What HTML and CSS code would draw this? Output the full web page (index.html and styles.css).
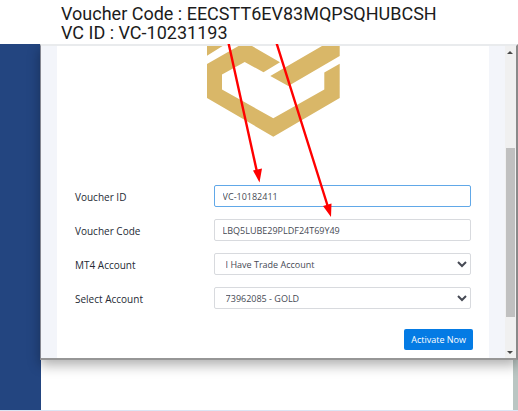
FILE: index.html
```html
<!DOCTYPE html>
<html lang="en">
<head>
<meta charset="utf-8">
<title>Voucher activation</title>
<link rel="stylesheet" href="styles.css">
</head>
<body>
<header class="caption">
  <p>Voucher Code : EECSTT6EV83MQPSQHUBCSH</p>
  <p>VC ID : VC-10231193</p>
</header>
<div class="stage">
  <div class="sidebar"></div>
  <div class="page">
    <div class="window">
      <main class="card">
        <div class="brand">
          <svg class="logo" viewBox="207 46 133 91" role="img" aria-label="Logo">
            <path d="M207 46H222.6L207 55.7ZM207 64L238.5 46H252L280 62.2L263.5 72.3L244.7 62L222 74.5V89.4L273.3 118.3L324.3 89.5V72.5L339.7 63.7V98L273.3 136.7L207 98ZM322 46H339.7V56L288.3 86L270.3 76Z"/>
          </svg>
        </div>
        <form class="form">
          <div class="row">
            <label for="voucher-id">Voucher ID</label>
            <input class="field active" id="voucher-id" type="text" value="VC-10182411">
          </div>
          <div class="row">
            <label for="voucher-code">Voucher Code</label>
            <input class="field" id="voucher-code" type="text" value="LBQ5LUBE29PLDF24T69Y49">
          </div>
          <div class="row">
            <label for="mt4">MT4 Account</label>
            <select class="field" id="mt4"><option>I Have Trade Account</option></select>
          </div>
          <div class="row">
            <label for="account">Select Account</label>
            <select class="field" id="account"><option>73962085 - GOLD</option></select>
          </div>
          <button class="submit" type="button">Activate Now</button>
        </form>
      </main>
      <div class="scrollbar" aria-hidden="true">
        <svg class="tick" viewBox="0 0 10 12"><path d="M5 5L8 8H2Z"/></svg>
        <div class="track"><div class="thumb"></div></div>
        <svg class="tick" viewBox="0 0 10 12"><path d="M2 5H8L5 8Z"/></svg>
      </div>
    </div>
  </div>
  <svg class="arrows" width="140" height="180" viewBox="220 44 140 180" aria-hidden="true">
    <path class="shaft" d="M228.500 43L257 172M276.500 43L328 207"/>
    <path class="head" d="M259.500 182.500L253 170.500L262 168.500ZM331 217L323 206L331.500 203.500Z"/>
  </svg>
</div>
</body>
</html>
```

FILE: styles.css
```css
* {
  box-sizing: border-box;
}

body {
  margin: 0;
  min-height: 100vh;
  display: flex;
  flex-direction: column;
  background: #fff;
  font-family: "Open Sans", "Noto Sans", sans-serif;
}

.caption {
  height: 44px;
  padding: 4px 0 0 61px;
  font: 18px/19px Roboto, sans-serif;
  color: #1c1c1c;
}

.caption p {
  margin: 0;
}

.stage {
  position: relative;
  overflow: hidden;
  flex: 1;
  display: flex;
  border-bottom: 1px solid #dce5f4;
}

.sidebar {
  width: 41px;
  background: #234580;
}

.page {
  flex: 1;
  min-width: 0;
  border-right: 5px solid #bac6c3;
}

.window {
  display: flex;
  margin: 0 -5px 0 -1px;
  padding-left: 16px;
  background: #f3f5fa;
  border: 1px solid #858791;
  border-top: 2px solid #e9ebed;
  border-right: 2px solid #8a8a8a;
  border-bottom: 2px solid #969696;
  box-shadow: 0 5px 12px rgba(0, 0, 0, 0.32);
}

.card {
  flex: 1;
  min-width: 0;
  margin-right: 16px;
  background: #fff;
}

.brand {
  display: flex;
  justify-content: center;
  height: 131px;
}

.logo {
  width: 133px;
  height: 91px;
  fill: #d9b768;
}

.form {
  display: flex;
  flex-direction: column;
  gap: 12px;
  padding: 8px 18px 8px;
}

.row {
  display: grid;
  grid-template-columns: 35% 65%;
  align-items: center;
  color: #252a34;
  font-size: 10px;
  line-height: 16px;
  font-weight: 500;
}

.row label {
  padding-top: 2px;
}

.field {
  width: 100%;
  height: 22px;
  margin: 0;
  padding: 0 8px;
  border: 1px solid #d8dade;
  border-radius: 2px;
  outline: 0;
  background: #fff;
  color: #464a54;
  font: 9px "Open Sans", "Noto Sans", sans-serif;
}

select.field {
  padding: 0 0 0 7px;
}

.active {
  border-color: #61a8e8;
}

.submit {
  align-self: flex-end;
  height: 21px;
  margin: 8px -2px 0 0;
  padding: 0 7px;
  border: 0;
  border-radius: 2px;
  background: #047be4;
  color: #fff;
  font: 500 9px "Open Sans", "Noto Sans", sans-serif;
}

.scrollbar {
  width: 11px;
  display: flex;
  flex-direction: column;
  background: #f0f0f0;
}

.tick {
  width: 10px;
  height: 12px;
  fill: #484848;
}

.track {
  flex: 1;
  padding: 90px 1px 29px;
}

.thumb {
  height: 100%;
  background: #c0c0c0;
}

.arrows {
  position: absolute;
  left: 220px;
  top: 0;
  pointer-events: none;
}

.shaft {
  fill: none;
  stroke: #f00;
  stroke-width: 2.4;
}

.head {
  fill: #f00;
}
```
